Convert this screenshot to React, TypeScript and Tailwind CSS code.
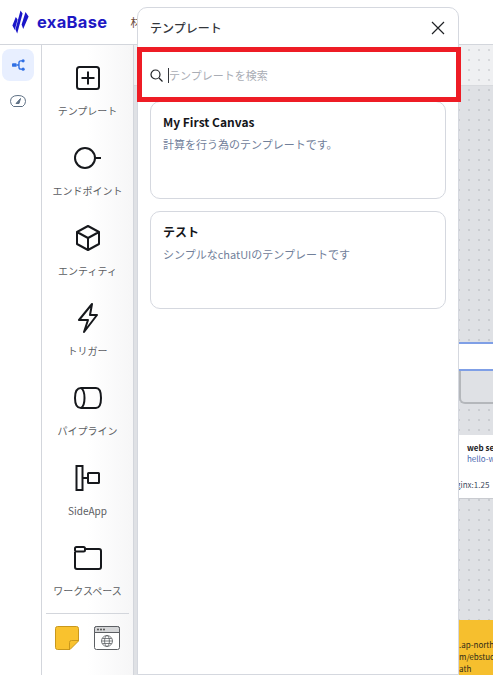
import React from "react";

const font = { fontFamily: '"Noto Sans CJK JP", "Noto Sans", sans-serif' };

function Tool({ label, children }: { label: string; children: React.ReactNode }) {
  return (
    <div className="flex h-[80px] flex-col items-center pt-[1px]">
      <div className="flex h-[36px] w-[36px] items-center justify-center">{children}</div>
      <div className="mt-[7px] whitespace-nowrap text-[10px] leading-[16px] text-[#5b5d62]">{label}</div>
    </div>
  );
}

const s = { fill: "none", stroke: "#16181c", strokeWidth: 2 } as const;

export default function App() {
  return (
    <div style={font} className="relative flex h-[675px] w-[493px] flex-col overflow-hidden bg-white">
      <header className="flex h-[45px] shrink-0 items-center border-b border-[#d3d6dc] bg-white pl-[12px]">
        <svg width="17" height="24" viewBox="0 0 17 23">
          <path d="M3.8 6.5 L5.6 9 L2.8 19.5 L0.4 15Z M8.5 0 L10.6 3 L5.2 23 L3.4 19Z M13.5 1.5 L16.6 6 L11.2 18.5 L9.6 14Z" fill="#1a16c9" />
        </svg>
        <span className="ml-[8px] text-[16.5px] font-bold leading-none tracking-[0.02em] text-[#1e17c4]" style={{ fontFamily: '"Inter", sans-serif' }}>exaBase</span>
        <span className="ml-[23px] text-[11px] text-[#6a4a3a]">材</span>
      </header>

      <div className="flex min-h-0 flex-1">
        <nav className="flex w-[42px] shrink-0 flex-col items-start border-r border-[#d3d6dc] bg-white pl-[2px] pt-[4px]">
          <div className="flex h-[32px] w-[32px] items-center justify-center rounded-[8px] bg-[#e8efff]">
            <svg width="13" height="12" viewBox="0 0 14 13">
              <rect x="0" y="4.5" width="5" height="4" rx="1" fill="#2f6fe4" />
              <path d="M5 6.5H7.5M12 2H9.5Q7.5 2 7.5 4V9Q7.5 11 9.5 11H12" fill="none" stroke="#2f6fe4" strokeWidth="1.5" />
              <circle cx="12" cy="2" r="1.7" fill="#2f6fe4" />
              <circle cx="12" cy="11" r="1.7" fill="#2f6fe4" />
            </svg>
          </div>
          <div className="ml-[6px] mt-[10px] flex h-[20px] w-[20px] items-center justify-center">
            <svg width="16" height="12" viewBox="0 0 16 12" fill="none" stroke="#5f7185" strokeWidth="1">
              <path d="M3.5 11.5H12.5Q15.5 9.5 15.5 6.5Q15.5 0.5 8 0.5Q0.5 0.5 0.5 6.5Q0.5 9.5 3.5 11.5Z" />
              <path d="M6 8.5 L10.5 3.5 L9 8.5Z" fill="#5f7185" />
            </svg>
          </div>
        </nav>

        <aside className="flex w-[91px] shrink-0 flex-col bg-gradient-to-r from-white via-white to-[#f6f6f7] pt-[14px]">
          <Tool label="テンプレート">
            <svg width="24" height="24" viewBox="0 0 24 24" {...s}>
              <rect x="1" y="1" width="22" height="22" rx="2.5" />
              <path d="M12 5.5V18.5M5.5 12H18.5" />
            </svg>
          </Tool>
          <Tool label="エンドポイント">
            <svg width="30" height="24" viewBox="0 0 30 24" {...s}>
              <circle cx="12" cy="12" r="10" />
              <path d="M22 12H28" />
            </svg>
          </Tool>
          <Tool label="エンティティ">
            <svg width="26" height="28" viewBox="0 0 26 28" {...s}>
              <path d="M13 2 L24 8 V20 L13 26 L2 20 V8Z M2 8 L13 14 L24 8 M13 14V26" strokeLinejoin="round" />
            </svg>
          </Tool>
          <Tool label="トリガー">
            <svg width="22" height="30" viewBox="0 0 22 30" {...s}>
              <path d="M15 1 L2 17 H11 L7 29 L20 12 H13 Z" strokeLinejoin="round" />
            </svg>
          </Tool>
          <Tool label="パイプライン">
            <svg width="28" height="22" viewBox="0 0 28 22" {...s}>
              <path d="M7 1H22Q27 1 27 11Q27 21 22 21H7Q1 21 1 11Q1 1 7 1Z" />
              <path d="M7 1Q10.5 3 10.5 11Q10.5 19 7 21" />
            </svg>
          </Tool>
          <Tool label="SideApp">
            <svg width="26" height="26" viewBox="0 0 26 26" {...s}>
              <rect x="1.5" y="1" width="6" height="24" />
              <path d="M7.5 13H13" />
              <rect x="13" y="8" width="11" height="10" rx="0.5" />
            </svg>
          </Tool>
          <Tool label="ワークスペース">
            <svg width="28" height="24" viewBox="0 0 28 24" {...s}>
              <path d="M12 3H25Q27 3 27 5V21Q27 23 25 23H3Q1 23 1 21V6" />
              <rect x="1" y="1" width="10" height="4.5" rx="1.5" />
            </svg>
          </Tool>
          <div className="mx-[4px] mt-[-6px] border-t border-[#d3d6dc]" />
          <div className="mt-[12px] flex items-center justify-between pl-[13px] pr-[13px]">
            <svg width="24" height="24" viewBox="0 0 24 24">
              <path d="M2.5 0.5H21.5Q23.5 0.5 23.5 2.5V15L15 23.5H2.5Q0.5 23.5 0.5 21.5V2.5Q0.5 0.5 2.5 0.5Z" fill="#f9c22e" stroke="#c9981c" />
              <path d="M23.5 14.5H16.5Q14.5 14.5 14.5 16.5V23.5" fill="none" stroke="#c9981c" />
            </svg>
            <svg width="26" height="24" viewBox="0 0 26 24" fill="none" stroke="#5c5f63">
              <rect x="0.5" y="0.5" width="25" height="23" rx="2" fill="#fff" />
              <path d="M0.5 6.5V2.5Q0.5 0.5 2.5 0.5H23.5Q25.5 0.5 25.5 2.5V6.5Z" fill="#d5d6d8" />
              <circle cx="4" cy="3.5" r="0.9" fill="#444" stroke="none" />
              <circle cx="7" cy="3.5" r="0.9" fill="#444" stroke="none" />
              <circle cx="10" cy="3.5" r="0.9" fill="#444" stroke="none" />
              <circle cx="13" cy="15" r="5.5" strokeWidth="0.8" />
              <ellipse cx="13" cy="15" rx="2.4" ry="5.5" strokeWidth="0.8" />
              <path d="M7.5 15H18.5M8.3 12.5H17.7M8.3 17.5H17.7" strokeWidth="0.8" />
            </svg>
          </div>
        </aside>

        <main className="relative min-w-0 flex-1 border-l border-[#d3d6dc] bg-[#dfe1e5] bg-[radial-gradient(#c8cbd0_0.7px,transparent_0.8px)] bg-[size:10px_10px]">
          <div className="h-[41px] border-b border-[#d8dade] bg-[#eff0f2] bg-[radial-gradient(#d5d7da_0.7px,transparent_0.8px)] bg-[size:10px_10px]" />
          <div className="absolute left-[325px] right-0 top-[297px] h-[29px] border-y-2 border-[#7f9fe6] bg-white" />
          <div className="absolute left-[325px] right-[-20px] top-[326px] h-[33px] rounded-bl-[6px] border-b-2 border-l-2 border-[#b4b7bb] bg-[#dfe1e5]" />
          <div className="absolute left-[325px] right-0 top-[390px] flex h-[64px] overflow-hidden whitespace-nowrap border-b border-[#c9cbd0] bg-white">
            <div className="mt-[6px] h-[17px] w-[3px] bg-[#f1f2f4]" />
            <div className="pl-[5px] pt-[7px] text-[8px] leading-[11px]">
              <div className="ml-[3px] font-bold text-[#1b1b1f]">web se</div>
              <div className="ml-[3px] text-[#4a68b0]">hello-w</div>
              <div className="ml-[-8px] mt-[15px] text-[#3f4c60]">ginx:1.25</div>
            </div>
          </div>
          <div className="absolute bottom-0 left-[325px] right-0 h-[55px] overflow-hidden whitespace-nowrap bg-[#f6bf2e] pt-[19px] text-[8px] leading-[12px] text-[#2f2a18]">
            <div>.ap-north</div>
            <div>m/ebstud</div>
            <div>ath</div>
          </div>
        </main>
      </div>

      <div className="absolute left-[137px] top-[7px] flex h-[668px] w-[322px] flex-col rounded-t-[10px] border border-[#d5d8df] bg-white px-[12px]">
        <div className="flex h-[40px] items-center justify-between pr-[1px]">
          <span className="text-[12px] font-medium text-[#33363b]">テンプレート</span>
          <svg width="14" height="14" viewBox="0 0 14 14" fill="none" stroke="#1f2125" strokeWidth="1.2">
            <path d="M1 1L13 13M13 1L1 13" />
          </svg>
        </div>
        <div className="flex h-[53px] items-center pt-[2px]">
          <svg width="13" height="13" viewBox="0 0 13 13" fill="none" stroke="#1f2125" strokeWidth="1.2">
            <circle cx="5.5" cy="5.5" r="4.5" />
            <path d="M9 9L12.5 12.5" />
          </svg>
          <span className="ml-[5px] h-[15px] w-px bg-[#33363b]" />
          <span className="text-[11px] text-[#a9adb5]">テンプレートを検索</span>
        </div>
        <div className="flex h-[98px] flex-col rounded-[10px] border border-[#d5d8df] px-[12px] pt-[10px]">
          <div className="text-[12px] font-bold leading-[20px] text-[#15161a]">My First Canvas</div>
          <div className="mt-[2px] text-[11px] leading-[20px] text-[#71809a]">計算を行う為のテンプレートです。</div>
        </div>
        <div className="mt-[12px] flex h-[98px] flex-col rounded-[10px] border border-[#d5d8df] px-[12px] pt-[10px]">
          <div className="text-[12px] font-bold leading-[20px] text-[#15161a]">テスト</div>
          <div className="mt-[2px] text-[11px] leading-[20px] text-[#71809a]">シンプルなchatUIのテンプレートです</div>
        </div>
      </div>

      <div className="absolute left-[137px] top-[47px] h-[55px] w-[324px] border-[5px] border-[#ee1c25]" />
    </div>
  );
}
